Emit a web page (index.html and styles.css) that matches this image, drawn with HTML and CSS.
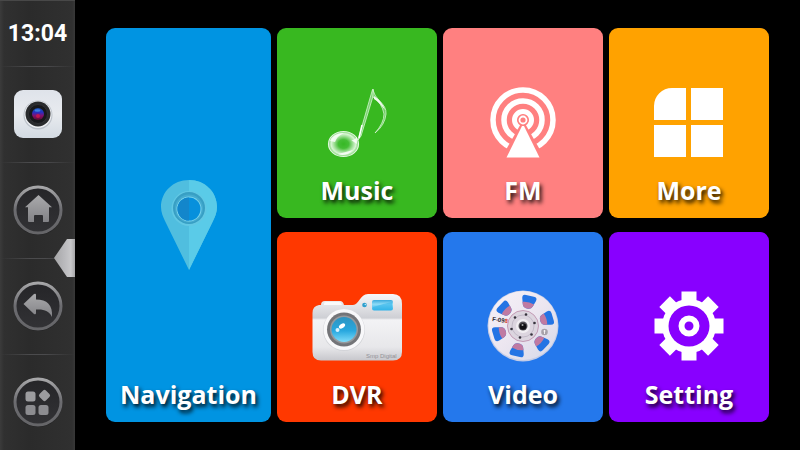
FILE: index.html
```html
<!DOCTYPE html>
<html lang="en">
<head>
<meta charset="utf-8">
<meta name="viewport" content="width=device-width, initial-scale=1">
<title>Car launcher</title>
<link rel="stylesheet" href="styles.css">
</head>
<body>
<div class="launcher">
  <aside class="sidebar">
    <time class="clock">13:04</time>
    <div class="slot">
      <button class="side-button" type="button" aria-label="Camera">
        <svg viewBox="0 0 50 50">
          <defs>
            <linearGradient id="camBg" x1="0" y1="0" x2="0" y2="1"><stop offset="0" stop-color="#dfe3ea"/><stop offset=".5" stop-color="#e8ebef"/><stop offset="1" stop-color="#d3dae2"/></linearGradient>
            <linearGradient id="camGlass" x1="0" y1="0" x2="0" y2="1"><stop offset="0" stop-color="#1c50a8"/><stop offset=".35" stop-color="#2630c4"/><stop offset=".65" stop-color="#85106e"/><stop offset="1" stop-color="#590d30"/></linearGradient>
          </defs>
          <rect x="1" y="1" width="48" height="48" rx="9" fill="url(#camBg)"/>
          <circle cx="25" cy="26" r="14.5" fill="#bcc2ca"/>
          <circle cx="25" cy="25.500" r="13.500" fill="#eef0f3"/>
          <circle cx="25" cy="25" r="12.500" fill="#292b2d"/>
          <circle cx="25" cy="25" r="9.500" fill="#17181b" stroke="#303134"/>
          <circle cx="25" cy="25" r="6" fill="url(#camGlass)"/>
          <circle cx="25" cy="27" r="2" fill="#cf194b" opacity=".8"/>
          <ellipse cx="24.500" cy="21.500" rx="3" ry="1.200" fill="#3b7ee0"/>
        </svg>
      </button>
    </div>
    <div class="slot">
      <button class="side-button" type="button" aria-label="Home">
        <svg viewBox="0 0 50 50">
          <defs>
            <linearGradient id="ring" x1="0" y1="0" x2="0" y2="1"><stop offset="0" stop-color="#a6a6a8"/><stop offset=".5" stop-color="#6c6c70"/><stop offset="1" stop-color="#656568"/></linearGradient>
            <linearGradient id="dial" x1="0" y1="0" x2="0" y2="1"><stop offset="0" stop-color="#252528"/><stop offset="1" stop-color="#323235"/></linearGradient>
            <linearGradient id="glyph" x1="0" y1="0" x2="0" y2="1"><stop offset="0" stop-color="#aaaaac"/><stop offset="1" stop-color="#828286"/></linearGradient>
          </defs>
          <circle cx="25" cy="26" r="24" fill="#202022"/>
          <circle cx="25" cy="25" r="23" fill="url(#dial)" stroke="url(#ring)" stroke-width="3"/>
          <path d="M25.500 10 39 22.300H36V36q0 1-1 1H30V31q0-1-1-1H22q-1 0-1 1v6H16q-1 0-1-1V22.300H12Z" fill="url(#glyph)"/>
        </svg>
      </button>
    </div>
    <div class="slot">
      <button class="side-button" type="button" aria-label="Back">
        <svg viewBox="0 0 50 50">
          <circle cx="25" cy="26" r="24" fill="#202022"/>
          <circle cx="25" cy="25" r="23" fill="url(#dial)" stroke="url(#ring)" stroke-width="3"/>
          <path d="M10.500 23 21 13q2-1 2 1v4.500C34 18.500 40 24 39 36 36 29.500 31 28 23 28.500V32q0 2-2 1Z" fill="url(#glyph)"/>
        </svg>
      </button>
    </div>
    <div class="slot">
      <button class="side-button" type="button" aria-label="Apps">
        <svg viewBox="0 0 50 50">
          <circle cx="25" cy="26" r="24" fill="#202022"/>
          <circle cx="25" cy="25" r="23" fill="url(#dial)" stroke="url(#ring)" stroke-width="3"/>
          <g fill="#9c9c9f"><rect x="12.500" y="14.500" width="10" height="10" rx="2.500"/><rect x="27" y="14" width="9" height="9" rx="2" transform="rotate(45 31.500 18.500)"/></g>
          <g fill="#8c8c90"><rect x="12.500" y="28" width="10" height="10" rx="2.500"/><rect x="25.500" y="28" width="10" height="10" rx="2.500"/></g>
        </svg>
      </button>
    </div>
    <button class="handle" type="button" aria-label="Hide side bar"></button>
  </aside>

  <main class="tiles">
    <a class="tile navigation" href="#navigation">
      <svg class="icon pin" viewBox="0 0 60 92">
        <path d="M30 1C14 1 2 13 2 28 2 33 4 38 6 42L30 91 54 42C56 38 58 33 58 28 58 13 46 1 30 1Z" fill="#50bedf"/>
        <path d="M30 1V91L54 42C56 38 58 33 58 28 58 13 46 1 30 1Z" fill="#5acbe8"/>
        <circle cx="30" cy="29.500" r="17.500" fill="#62c8e4"/>
        <circle cx="30" cy="29" r="16" fill="#389fc4"/>
        <circle cx="30" cy="29.500" r="14" fill="#45abcf"/>
        <circle cx="30" cy="30" r="12.500" fill="#7ad3ec"/>
        <circle cx="30" cy="30" r="11.500" fill="#0790dc"/>
        <path d="M30 18.500A11.500 11.500 0 0 0 30 41.500Z" fill="#1386cb"/>
      </svg>
      <span class="label">Navigation</span>
    </a>
    <a class="tile music" href="#music">
      <svg class="icon" viewBox="0 0 72 72">
        <defs>
          <radialGradient id="bubble"><stop offset="0" stop-color="#36b825"/><stop offset=".35" stop-color="#45be36"/><stop offset=".65" stop-color="#a7e29f"/><stop offset=".82" stop-color="#d9f5d5"/><stop offset="1" stop-color="#75d06a"/></radialGradient>
        </defs>
        <ellipse cx="22.500" cy="58" rx="15" ry="12.500" fill="url(#bubble)" stroke="#dff6dc" stroke-width="1.200"/>
        <path d="M9 55Q12 47 23 47 16 50 14 56ZM17 68q8 3 15-4-7 2-15 4" fill="#fff" opacity=".8"/>
        <path d="M36 51Q32 55 30 54L36 58Z" fill="#fff" opacity=".8"/>
        <path d="M37 54 51.500 3.500 53 7 40 50Z" fill="#77d26c" stroke="#d6f4d2" stroke-width=".8"/>
        <path d="M41 39 38 52" stroke="#fff" stroke-width="1.500"/>
        <path d="M52 3C53 14 66 17 65 28Q64 39 54 47 63 37 63 28 61 17 52 11Z" fill="#6fce63" stroke="#d6f4d2" stroke-width=".8"/>
        <path d="M53 10Q61 15 64 24 58 16 53 13Z" fill="#effbed"/>
      </svg>
      <span class="label">Music</span>
    </a>
    <a class="tile fm" href="#fm">
      <svg class="icon" viewBox="0 0 72 72">
        <g fill="none" stroke="#fff"><circle cx="36" cy="34" r="30" stroke-width="5.500"/><circle cx="36" cy="34" r="19" stroke-width="5.500"/><circle cx="36" cy="34" r="8.500" stroke-width="5"/></g>
        <path d="M36 34 12 76H60Z" fill="#ff8080"/>
        <circle cx="36" cy="34" r="5.500" fill="#ff8080"/>
        <circle cx="36" cy="34" r="3.500" fill="none" stroke="#fff" stroke-width="1.800"/>
        <path d="M35 40h2L52.500 71.500h-33Z" fill="#fff"/>
      </svg>
      <span class="label">FM</span>
    </a>
    <a class="tile more" href="#more">
      <svg class="icon" viewBox="0 0 72 72">
        <path d="M1 34V20A18 18 0 0 1 19 2H33V34ZM38 2H70V34H38ZM1 39H33V71H1ZM38 39H70V71H38Z" fill="#fff"/>
      </svg>
      <span class="label">More</span>
    </a>
    <a class="tile dvr" href="#dvr">
      <svg class="icon wide" viewBox="0 0 96 72">
        <defs>
          <linearGradient id="body" x1="0" y1="0" x2="0" y2="1"><stop offset="0" stop-color="#f7f7f9"/><stop offset=".36" stop-color="#cecfd4"/><stop offset=".39" stop-color="#f3f3f5"/><stop offset=".8" stop-color="#e7e7ea"/><stop offset="1" stop-color="#c7c7cc"/></linearGradient>
          <linearGradient id="lens" x1="0" y1="0" x2="0" y2="1"><stop offset="0" stop-color="#2f93c0"/><stop offset=".55" stop-color="#28a8df"/><stop offset="1" stop-color="#7edcfa"/></linearGradient>
          <linearGradient id="flash" x1="0" y1="0" x2="0" y2="1"><stop offset="0" stop-color="#39a9dc"/><stop offset=".4" stop-color="#8edcf7"/><stop offset="1" stop-color="#2cb0e7"/></linearGradient>
        </defs>
        <path d="M10 15H12Q12 11 16 11H31Q34 11 35 15H44C50 15 51 4 59 4H84Q93 4 93 14V62Q93 70.500 84 70.500H12Q3.500 70.500 3.500 62V23Q3.500 16 10 15Z" fill="url(#body)"/>
        <path d="M15 15V13.500Q15 12 17 12H30Q32 12 33 15" fill="#fafafa"/>
        <circle cx="35" cy="40" r="21" fill="#d3d4d8"/>
        <circle cx="35" cy="39.500" r="20.500" fill="#f8f8fa"/>
        <circle cx="35" cy="39.500" r="17" fill="#737478"/>
        <circle cx="35" cy="39.500" r="14" fill="#96999d"/>
        <circle cx="35" cy="39.500" r="12.500" fill="url(#lens)"/>
        <ellipse cx="33" cy="36" rx="3.500" ry="2" fill="#fff" transform="rotate(-35 33 36)"/>
        <circle cx="28.500" cy="40" r="2" fill="#d8f3ff"/>
        <circle cx="55.500" cy="15" r="2.300" fill="#2e9fce"/><circle cx="56.300" cy="14.500" r=".8" fill="#b7eafb"/>
        <rect x="63" y="10" width="21" height="10.500" rx="2" fill="url(#flash)"/>
        <path d="M64 17Q73 14 83 12V18Q83 20 81 20H66Q64 20 64 18Z" fill="#35b5ea" opacity=".6"/>
        <text class="camera-mark" x="57" y="68">Smp Digital</text>
      </svg>
      <span class="label">DVR</span>
    </a>
    <a class="tile video" href="#video">
      <svg class="icon" viewBox="0 0 72 72">
        <defs>
          <linearGradient id="reel" x1="0" y1="0" x2="1" y2="1"><stop offset="0" stop-color="#f6f2f8"/><stop offset=".5" stop-color="#ece6f0"/><stop offset="1" stop-color="#d5d8e8"/></linearGradient>
          <g id="slot">
            <path d="M29 9Q28 5 32 5H40Q44 5 43 9L41 15Q40 18 36 18 32 18 31 15Z" fill="#2474e4"/>
            <path d="M30 12.500Q36 10.500 42 12.500L41 15Q40 18 36 18 32 18 31 15Z" fill="#c07aa2"/>
          </g>
        </defs>
        <circle cx="36" cy="36" r="35.500" fill="#c4cce6"/>
        <circle cx="36" cy="35.500" r="34.500" fill="url(#reel)"/>
        <use href="#slot" transform="rotate(13 36 36)"/><use href="#slot" transform="rotate(73 36 36)"/><use href="#slot" transform="rotate(133 36 36)"/><use href="#slot" transform="rotate(193 36 36)"/><use href="#slot" transform="rotate(253 36 36)"/><use href="#slot" transform="rotate(313 36 36)"/>
        <circle cx="36" cy="36" r="15.500" fill="#dcd5df" stroke="#c39bb5" stroke-width="1"/>
        <circle cx="36" cy="36" r="11" fill="none" stroke="#c2bac8" stroke-width="1"/>
        <circle cx="36" cy="36" r="7" fill="#f1eef2"/>
        <circle cx="36" cy="36" r="4.500" fill="#555259"/><circle cx="36" cy="36.500" r="3.300" fill="#111014"/><circle cx="35.500" cy="35" r="1" fill="#aaa"/>
        <g fill="#36323c"><circle cx="39" cy="24.500" r="1.300"/><circle cx="47.500" cy="33" r="1.300"/><circle cx="44.500" cy="44.500" r="1.300"/><circle cx="33" cy="47.500" r="1.300"/><circle cx="24.500" cy="39" r="1.300"/><circle cx="28" cy="27.500" r="1.300"/></g>
        <circle cx="57.500" cy="42" r="3.300" fill="#a7a2aa"/><path d="M57.500 44V40M56.500 41H58.500" stroke="#fff" stroke-width=".8"/>
        <text class="reel-mark" x="5" y="31" transform="rotate(8 5 31)">F-09<tspan class="reel-mark-end">8</tspan></text>
      </svg>
      <span class="label">Video</span>
    </a>
    <a class="tile setting" href="#setting">
      <svg class="icon" viewBox="0 0 72 72">
        <g fill="#fff"><rect x="28.500" y="1.500" width="15" height="69"/><rect x="1.500" y="28.500" width="69" height="15"/><g transform="rotate(45 36 36)"><rect x="28.500" y="1.500" width="15" height="69"/><rect x="1.500" y="28.500" width="69" height="15"/></g></g>
        <circle cx="36" cy="36" r="27" fill="#fff"/>
        <circle cx="36" cy="36" r="20.500" fill="#8800ff"/>
        <circle cx="36" cy="36" r="7.500" fill="none" stroke="#fff" stroke-width="6"/>
      </svg>
      <span class="label">Setting</span>
    </a>
  </main>
</div>
</body>
</html>
```
FILE: styles.css
```css
* {
  box-sizing: border-box;
}

body {
  margin: 0;
  background: #000;
  color: #fff;
  font-family: "Open Sans", "Noto Sans", sans-serif;
}

.launcher {
  display: grid;
  grid-template-columns: 75px 1fr;
  min-height: 100vh;
}

.sidebar {
  position: relative;
  display: grid;
  grid-template-rows: 65px repeat(4, 1fr);
  background: linear-gradient(90deg, #3b3b3b 0, #303030 4px, #2b2b2b 40%, #303030 96%, #383838 100%);
  border-top: 1px solid #484848;
}

.clock {
  display: flex;
  align-items: center;
  justify-content: center;
  font: 700 23px/28px Roboto, sans-serif;
}

.slot {
  display: flex;
  align-items: center;
  justify-content: center;
  background: linear-gradient(90deg, transparent, #4b4b4d 40%, #4b4b4d 60%, transparent) top / 100% 1px no-repeat;
}

.side-button {
  width: 50px;
  height: 50px;
  padding: 0;
  border: 0;
  background: none;
  cursor: pointer;
}

.side-button svg {
  display: block;
}

.handle {
  position: absolute;
  top: 238px;
  right: 0;
  width: 21px;
  height: 38px;
  padding: 0;
  border: 0;
  background: linear-gradient(90deg, #a4a4a6, #bcbcbf 55%, #c8c8ca 80%, #a6a6a8);
  clip-path: polygon(0 50%, 62% 0, 100% 0, 100% 100%, 62% 100%);
  cursor: pointer;
}

.tiles {
  display: grid;
  grid-template-columns: 165fr repeat(3, 160fr);
  grid-template-rows: 1fr 1fr;
  gap: 14px 6px;
  padding: 28px 31px;
}

.tile {
  display: flex;
  flex-direction: column;
  align-items: center;
  justify-content: flex-end;
  gap: 15px;
  padding-bottom: 11px;
  border-radius: 9px;
  color: #fff;
  text-decoration: none;
}

.icon {
  width: 72px;
  height: 72px;
}

.icon.wide {
  width: 96px;
}

.icon.pin {
  width: 60px;
  height: 92px;
  margin: auto 0;
}

.label {
  font-size: 25px;
  font-weight: 700;
  line-height: 34px;
  text-shadow: 2px 3px 4px rgba(0, 0, 0, 0.9);
}

.navigation {
  grid-row: span 2;
  gap: 0;
  padding-top: 45px;
  background: #0094e2;
}

.music { background: #38b820; }
.fm { background: #ff8080; }
.more { background: #ffa200; }
.dvr { background: #ff3800; }
.video { background: #2478ec; }
.setting { background: #8800ff; }

.camera-mark {
  font: 6px "Liberation Sans", sans-serif;
  fill: #929297;
}

.reel-mark {
  font: 700 6px "Liberation Sans", sans-serif;
  fill: #29232b;
}

.reel-mark-end {
  fill: #d23a2c;
}
```
